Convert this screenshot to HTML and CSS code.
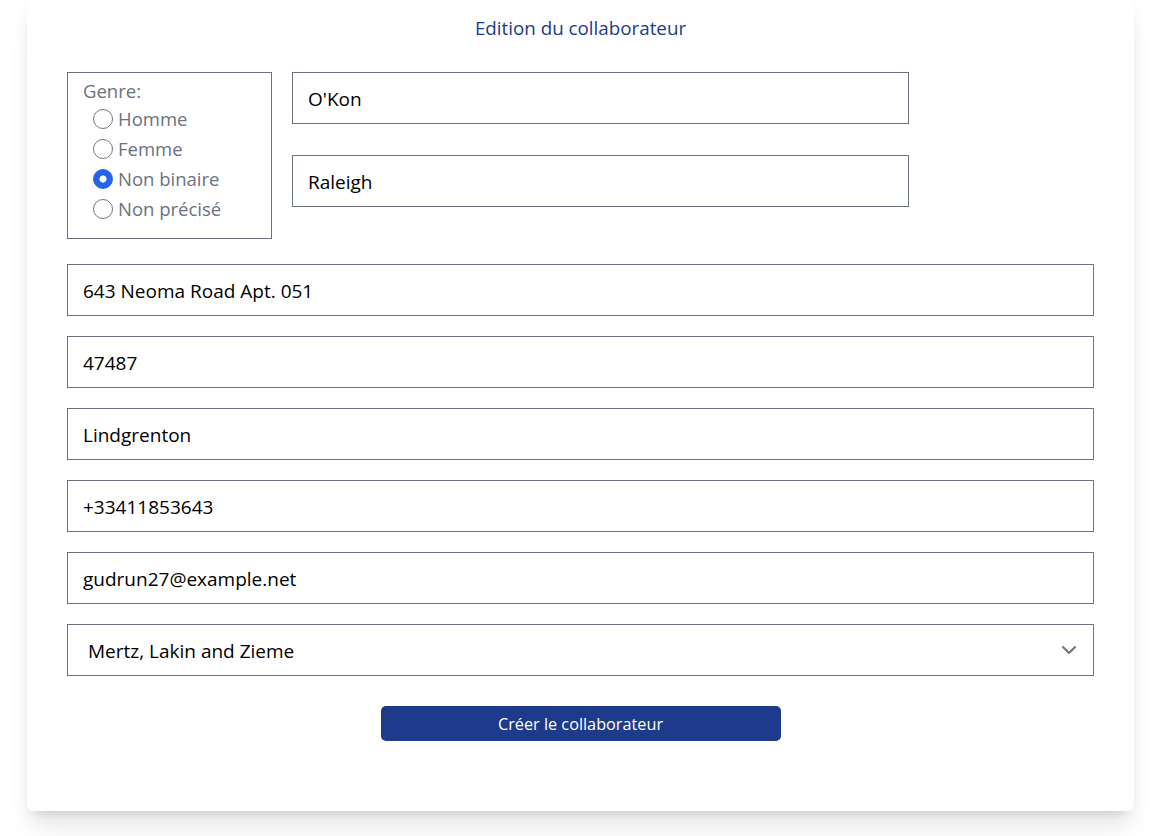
FILE: index.html
```html
<!DOCTYPE html>
<html lang="fr">
<head>
<meta charset="utf-8">
<title>Edition du collaborateur</title>
<link rel="stylesheet" href="styles.css">
</head>
<body>
<div class="page">
  <main class="card">
    <h1 class="title">Edition du collaborateur</h1>
    <form class="form">
      <div class="top">
        <fieldset class="genre">
          <div class="genre-label">Genre:</div>
          <label class="radio-row"><input class="radio" type="radio" name="genre"><span>Homme</span></label>
          <label class="radio-row"><input class="radio" type="radio" name="genre"><span>Femme</span></label>
          <label class="radio-row"><input class="radio" type="radio" name="genre" checked><span>Non binaire</span></label>
          <label class="radio-row"><input class="radio" type="radio" name="genre"><span>Non précisé</span></label>
        </fieldset>
        <div class="names">
          <input class="field" type="text" value="O'Kon">
          <input class="field" type="text" value="Raleigh">
        </div>
      </div>
      <input class="field" type="text" value="643 Neoma Road Apt. 051">
      <input class="field" type="text" value="47487">
      <input class="field" type="text" value="Lindgrenton">
      <input class="field" type="text" value="+33411853643">
      <input class="field" type="text" value="gudrun27@example.net">
      <div class="select-wrap">
        <select class="field select">
          <option>Mertz, Lakin and Zieme</option>
        </select>
        <svg class="chevron" width="16" height="10" viewBox="0 0 16 10" aria-hidden="true">
          <path d="M2 2 L8 8 L14 2" fill="none" stroke="#6b7280" stroke-width="2" stroke-linecap="round" stroke-linejoin="round"/>
        </svg>
      </div>
      <div class="actions">
        <button class="submit" type="button">Créer le collaborateur</button>
      </div>
    </form>
  </main>
</div>
</body>
</html>
```

FILE: styles.css
```css
* { box-sizing: border-box; }

html, body {
  margin: 0;
  padding: 0;
  background: #ffffff;
}

body {
  font-family: "Open Sans", "Noto Sans", sans-serif;
  color: #000;
}

.page {
  padding: 0 20px 25px 27px;
}

.card {
  background: #ffffff;
  border-radius: 0 0 6px 6px;
  box-shadow: 0 20px 25px -5px rgba(0, 0, 0, 0.1), 0 8px 10px -6px rgba(0, 0, 0, 0.1), 0 0 12px rgba(0, 0, 0, 0.03);
  padding: 14px 40px 70px 40px;
}

.title {
  margin: 0 0 30px 0;
  text-align: center;
  font-size: 18.8px;
  font-weight: 400;
  line-height: 28px;
  color: #1e3a8a;
}

.form {
  display: flex;
  flex-direction: column;
  gap: 20px;
}

.top {
  display: flex;
  gap: 20px;
  align-items: flex-start;
  margin-bottom: 5px;
}

.genre {
  margin: 0;
  width: 205px;
  flex: none;
  border: 1px solid #6b7280;
  padding: 5px 15px 14px 15px;
  color: #6b7280;
  font-size: 18.5px;
}

.genre-label {
  line-height: 26px;
}

.radio-row {
  display: flex;
  align-items: center;
  gap: 5px;
  height: 30px;
  padding-left: 10px;
  line-height: 30px;
}

.radio {
  appearance: none;
  -webkit-appearance: none;
  margin: 0;
  width: 20px;
  height: 20px;
  flex: none;
  border: 1px solid #767676;
  border-radius: 50%;
  background: #ffffff;
}

.radio:checked {
  border-color: #2563eb;
  background: radial-gradient(circle, #ffffff 0 3.2px, #2563eb 3.9px);
}

.names {
  width: 617px;
  display: flex;
  flex-direction: column;
  gap: 31px;
}

.field {
  display: block;
  width: 100%;
  height: 52px;
  margin: 0;
  border: 1px solid #6b7280;
  border-radius: 0;
  background: #ffffff;
  padding: 12px 15px 10px 15px;
  font-family: inherit;
  font-size: 19px;
  line-height: 28px;
  color: #000;
  outline: none;
}

.select-wrap {
  position: relative;
}

.select {
  appearance: none;
  -webkit-appearance: none;
  padding-left: 20px;
  padding-right: 48px;
}

.chevron {
  position: absolute;
  right: 17px;
  top: 21px;
  pointer-events: none;
}

.actions {
  display: flex;
  justify-content: center;
  padding-top: 10px;
}

.submit {
  width: 400px;
  height: 35px;
  border: none;
  border-radius: 5px;
  background: #1e3a8a;
  color: #ffffff;
  font-family: inherit;
  font-size: 16.25px;
  line-height: 36px;
  padding: 0;
  cursor: pointer;
}
```
